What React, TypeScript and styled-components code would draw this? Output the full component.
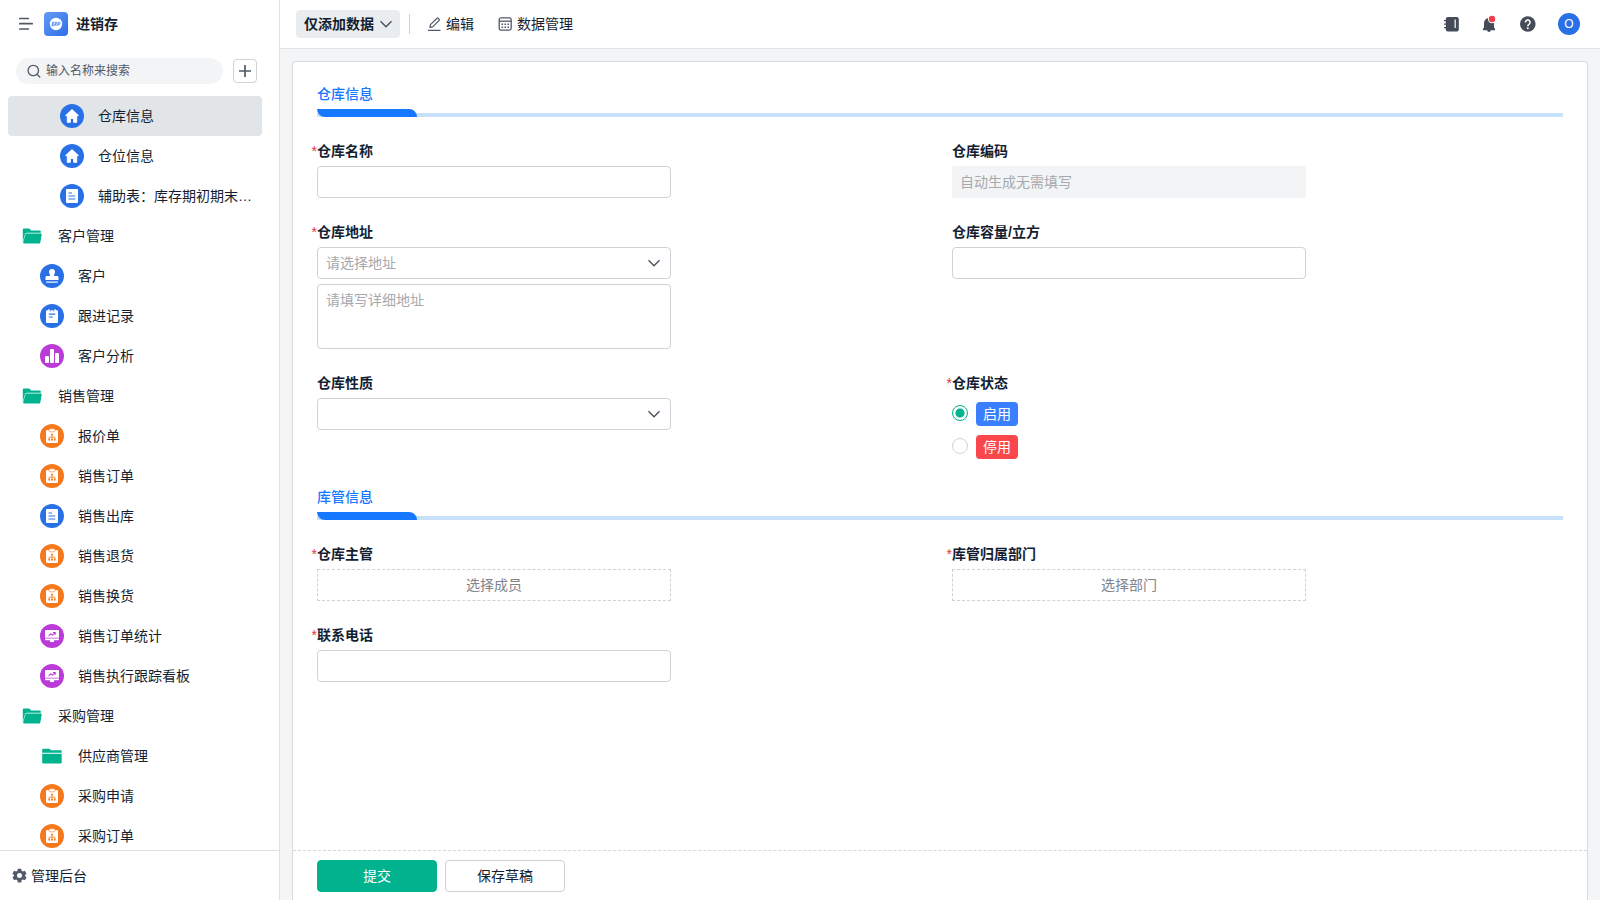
import React from 'react';
import styled, { createGlobalStyle } from 'styled-components';

const INK = '#141e31';
const ICON = '#525967';
const BORDER = '#cfd2d6';
const GREEN = '#00b28e';
const BLUE = '#2970e6';
const ORANGE = '#f7781c';
const PURPLE = '#bb3bd8';

const GlobalStyle = createGlobalStyle`
  *, *::before, *::after { box-sizing: border-box; }
  body {
    margin: 0;
    color: ${INK};
    background: #f3f5f6;
    font: 14px/22px "Liberation Sans", "Noto Sans CJK SC", sans-serif;
  }
  button, input, select, textarea { font: inherit; color: inherit; margin: 0; }
  svg { display: block; flex: none; }
`;

const Shell = styled.div`
  display: flex;
  height: 100vh;
`;

/* Sidebar */

const Sidebar = styled.aside`
  display: flex;
  flex-direction: column;
  flex: none;
  width: 280px;
  background: #fff;
  border-right: 1px solid #dfe2e5;
`;

const Brand = styled.div`
  display: flex;
  align-items: center;
  height: 48px;
  padding: 0 18px;
`;

const BrandName = styled.h1`
  margin: 0 0 0 8px;
  font-size: 14px;
  line-height: 22px;
  font-weight: 600;
`;

const IconButton = styled.button<{ $w?: number }>`
  display: flex;
  align-items: center;
  justify-content: center;
  width: ${(p) => p.$w ?? 16}px;
  height: 24px;
  padding: 0;
  border: 0;
  background: none;
  color: ${ICON};
  cursor: pointer;
`;

const BurgerButton = styled(IconButton)`
  margin-right: 10px;
`;

const SearchRow = styled.div`
  display: flex;
  align-items: center;
  gap: 10px;
  height: 46px;
  padding: 0 22px 0 16px;
`;

const SearchBox = styled.label`
  display: flex;
  flex: 1;
  align-items: center;
  gap: 4px;
  min-width: 0;
  height: 26px;
  padding: 0 10px;
  border-radius: 13px;
  background: #f3f4f6;
  color: ${ICON};
`;

const SearchInput = styled.input`
  flex: 1;
  min-width: 0;
  padding: 0;
  border: 0;
  outline: 0;
  background: none;
  font-size: 12px;
  line-height: 20px;
  &::placeholder { color: #525967; opacity: 1; }
`;

const AddButton = styled(IconButton)`
  flex: none;
  border: 1px solid ${BORDER};
  border-radius: 4px;
`;

const Menu = styled.nav`
  flex: 1;
  min-height: 0;
  padding: 2px 17px 0 8px;
  overflow-y: auto;
  scrollbar-width: none;
`;

const MenuItem = styled.a<{ $level: number; $active?: boolean }>`
  display: flex;
  align-items: center;
  gap: 14px;
  height: 40px;
  padding: 0 8px 0 ${(p) => p.$level * 20 - 8}px;
  border-radius: 4px;
  background: ${(p) => (p.$active ? '#e1e5e8' : 'transparent')};
  color: inherit;
  text-decoration: none;
`;

const MenuText = styled.span`
  overflow: hidden;
  white-space: nowrap;
  text-overflow: ellipsis;
`;

const SidebarFooter = styled.a`
  display: flex;
  align-items: center;
  gap: 4px;
  height: 50px;
  padding: 0 12px;
  border-top: 1px solid #dfe2e5;
  color: inherit;
  text-decoration: none;
`;

/* Main area */

const Main = styled.main`
  display: flex;
  flex: 1;
  flex-direction: column;
  min-width: 0;
`;

const Toolbar = styled.header`
  display: flex;
  align-items: center;
  flex: none;
  height: 49px;
  padding: 0 20px 0 16px;
  background: #fff;
  border-bottom: 1px solid #e0e3e6;
`;

const ModeButton = styled.button`
  display: flex;
  align-items: center;
  gap: 5px;
  height: 28px;
  padding: 0 7px 0 8px;
  border: 0;
  border-radius: 4px;
  background: #e9edef;
  font-weight: 600;
`;

const Divider = styled.span`
  width: 1px;
  height: 20px;
  margin: 0 17px 0 9px;
  background: ${BORDER};
`;

const ToolGroup = styled.div`
  display: flex;
  flex: 1;
  gap: 24px;
`;

const ToolButton = styled.button`
  display: flex;
  align-items: center;
  gap: 4px;
  padding: 0;
  border: 0;
  background: none;
  svg { color: ${ICON}; }
`;

const Actions = styled.div`
  display: flex;
  align-items: center;
  gap: 22px;
`;

const Avatar = styled.button`
  width: 22px;
  height: 22px;
  padding: 0;
  border: 0;
  border-radius: 50%;
  background: ${BLUE};
  color: #fff;
  font-size: 12px;
  line-height: 22px;
`;

const Card = styled.form`
  display: flex;
  flex: 1;
  flex-direction: column;
  min-height: 0;
  margin: 12px 12px 0;
  border: 1px solid #d9dcdf;
  border-bottom: 0;
  border-radius: 4px 4px 0 0;
  background: #fff;
`;

const CardBody = styled.div`
  display: flex;
  flex: 1;
  flex-direction: column;
  gap: 23px;
  min-height: 0;
  padding: 21px 24px;
  overflow-y: auto;
`;

const SectionTitle = styled.h2`
  margin: 0;
  padding-bottom: 4px;
  font-size: 14px;
  line-height: 22px;
  font-weight: 500;
  color: #1677ff;
`;

const SectionBar = styled.div`
  height: 8px;
  background: linear-gradient(#c8e0f9, #c8e0f9) bottom / 100% 4px no-repeat;
  &::before {
    content: '';
    display: block;
    width: 100px;
    height: 8px;
    border-radius: 0 8px 0 8px;
    background: #1677ff;
  }
`;

const Grid = styled.div`
  display: grid;
  grid-template-columns: 1fr 1fr;
  gap: 23px 24px;
`;

const FieldBox = styled.div`
  display: flex;
  flex-direction: column;
  width: 100%;
  max-width: 354px;
`;

const Caption = styled.label`
  position: relative;
  margin-bottom: 4px;
  font-weight: 600;
`;

const Required = styled.span`
  position: absolute;
  right: 100%;
  color: #e0343a;
  font-weight: 400;
`;

const TextInput = styled.input`
  width: 100%;
  height: 32px;
  padding: 0 8px;
  border: 1px solid ${BORDER};
  border-radius: 4px;
  background: #fff;
  &::placeholder { color: #a6a9ae; opacity: 1; }
  &:disabled {
    border-color: #f3f4f6;
    border-radius: 2px;
    padding: 0 7px;
    background: #f3f4f6;
  }
`;

const SelectWrap = styled.div`
  position: relative;
`;

const SelectInput = styled.select`
  display: block;
  width: 100%;
  height: 32px;
  padding: 0 32px 0 8px;
  border: 1px solid ${BORDER};
  border-radius: 4px;
  appearance: none;
  background: #fff;
  color: #a6a9ae;
`;

const SelectArrow = styled.span`
  position: absolute;
  top: 9px;
  right: 10px;
  color: ${ICON};
  pointer-events: none;
`;

const TextArea = styled.textarea`
  display: block;
  height: 65px;
  margin-top: 5px;
  padding: 4px 8px;
  border: 1px solid ${BORDER};
  border-radius: 4px;
  resize: none;
  &::placeholder { color: #a6a9ae; opacity: 1; }
`;

const PickerButton = styled.button`
  height: 32px;
  border: 1px dashed ${BORDER};
  background: #fff;
  color: #7f848d;
`;

const Options = styled.fieldset`
  display: flex;
  flex-direction: column;
  gap: 1px;
  min-width: 0;
  margin: 0;
  padding: 0;
  border: 0;
`;

const OptionsCaption = styled.span`
  position: relative;
  margin-bottom: 3px;
  font-weight: 600;
`;

const Option = styled.label`
  display: flex;
  align-items: center;
  gap: 8px;
  height: 32px;
`;

const Radio = styled.input`
  width: 16px;
  height: 16px;
  margin: 0 0 2px;
  border: 1px solid ${BORDER};
  border-radius: 50%;
  appearance: none;
  background: #fff;
  &:checked {
    border-color: ${GREEN};
    background: radial-gradient(circle, ${GREEN} 4px, #fff 5px);
  }
`;

const Chip = styled.span<{ $color: string }>`
  padding: 0 7px;
  border-radius: 4px;
  background: ${(p) => p.$color};
  color: #fff;
  line-height: 24px;
`;

const FormFooter = styled.footer`
  display: flex;
  gap: 8px;
  flex: none;
  height: 50px;
  padding: 9px 24px 0;
  border-top: 1px dashed #d5d7da;
`;

const FormButton = styled.button<{ $primary?: boolean }>`
  width: 120px;
  height: 32px;
  padding: 0;
  border: 1px solid ${(p) => (p.$primary ? GREEN : BORDER)};
  border-radius: 4px;
  background: ${(p) => (p.$primary ? GREEN : '#fff')};
  color: ${(p) => (p.$primary ? '#fff' : INK)};
`;

/* Icons */

type Glyph = 'home' | 'doc' | 'stamp' | 'note' | 'chart' | 'clip' | 'board' | 'open' | 'folder';

const GLYPHS: Record<Glyph, { bg?: string; art: React.ReactNode }> = {
  home: {
    bg: BLUE,
    art: <path fill="#fff" stroke="#fff" strokeLinejoin="round" d="M12 5.600l6.400 6h-1.700v6.700h-3v-3.800h-3.400v3.800h-3v-6.700H5.600z" />,
  },
  doc: {
    bg: BLUE,
    art: (
      <>
        <rect x="6" y="5" width="12" height="14" rx="1" fill="#fff" />
        <path stroke={BLUE} strokeWidth="1.200" d="M8.500 9H12M8.500 12h6.800M8.500 15h6.800" />
      </>
    ),
  },
  stamp: {
    bg: BLUE,
    art: (
      <>
        <path fill="#fff" d="M12 5a3 3 0 0 1 3 3c0 1.500-1 2-1 3.200 0 .600.400.800 1 .800h2c1 0 1.500.6 1.500 1.500V16h-13v-2.500c0-.9.500-1.500 1.500-1.500h2c.6 0 1-.2 1-.8C10 10 9 9.500 9 8a3 3 0 0 1 3-3z" />
        <path stroke="#fff" strokeWidth="1.200" d="M6.200 18.100h11.600" />
      </>
    ),
  },
  note: {
    bg: BLUE,
    art: (
      <>
        <rect x="6" y="6.200" width="12" height="12.800" rx="1" fill="#fff" />
        <path stroke="#fff" strokeWidth="1.400" strokeLinecap="round" d="M9 5.700V7M15 5.700V7" />
        <path stroke={BLUE} strokeWidth=".7" d="M10.200 5.500v2M13.800 5.500v2" />
        <path stroke={BLUE} strokeWidth="1.200" d="M8.800 10.100h6.400M8.800 13h4" />
      </>
    ),
  },
  chart: {
    bg: PURPLE,
    art: (
      <g fill="#fff">
        <rect x="5" y="12" width="4" height="7" rx="1" />
        <rect x="10" y="5" width="4" height="14" rx="1" />
        <rect x="15" y="9" width="4" height="10" rx="1" />
      </g>
    ),
  },
  clip: {
    bg: ORANGE,
    art: (
      <>
        <rect x="6" y="6" width="12" height="13" rx="1" fill="#fff" />
        <rect x="9" y="4.800" width="6" height="3" rx=".8" fill="#fff" stroke={ORANGE} strokeWidth=".6" />
        <path fill="none" stroke={ORANGE} strokeWidth=".8" d="M12 11v4M9.200 15v-1.800h5.600V15" />
        <path fill={ORANGE} d="M11.100 9.700h1.800v1.800h-1.800zM8.300 14.700H10v1.700H8.300zM11.100 14.700h1.800v1.700h-1.800zM14 14.700h1.700v1.700H14z" />
      </>
    ),
  },
  board: {
    bg: PURPLE,
    art: (
      <>
        <path fill="#fff" d="M6 6h12a1 1 0 0 1 1 1v6.700H5V7a1 1 0 0 1 1-1zM5 14.600h14v.7a1 1 0 0 1-1 1h-4V18h-4v-1.700H6a1 1 0 0 1-1-1z" />
        <path fill="none" stroke={PURPLE} strokeWidth="1.100" d="M8.600 11.800l2.200-2 1.700 1.500 2.500-2.600M12.900 8.500h2.300v2.200" />
      </>
    ),
  },
  open: {
    art: (
      <>
        <path fill={GREEN} d="M2.800 17.500V5.500a1 1 0 0 1 1-1h5.400l2 2h8.600a1 1 0 0 1 1 1v1.300H6.800a2 2 0 0 0-1.800 1.400z" />
        <path fill={GREEN} d="M6.900 9.500h14c.6 0 .9.500.8 1l-1.400 8c-.1.600-.6.900-1.100.9H4.200c-.8 0-1.200-.6-1-1.300l2.200-7.500c.2-.7.800-1.100 1.500-1.100z" />
      </>
    ),
  },
  folder: {
    art: (
      <>
        <path fill={GREEN} d="M2.200 8.800V5.700a1 1 0 0 1 1-1h6l2 1.600h9.500a1 1 0 0 1 1 1v1.500z" />
        <path fill={GREEN} d="M2.200 9.800h19.500v8.600a1 1 0 0 1-1 1H3.200a1 1 0 0 1-1-1z" />
      </>
    ),
  },
};

const MenuGlyph = ({ name }: { name: Glyph }) => (
  <svg width="24" height="24" viewBox="0 0 24 24" aria-hidden="true">
    {GLYPHS[name].bg && <circle cx="12" cy="12" r="12" fill={GLYPHS[name].bg} />}
    {GLYPHS[name].art}
  </svg>
);

const Burger = () => (
  <svg width="16" height="16" viewBox="0 0 16 16" stroke="currentColor" strokeWidth="1.700" strokeLinecap="round">
    <path d="M1.800 2.500h8.500M1.800 7.700h12.400M1.800 13h8.500" />
  </svg>
);

const Logo = () => (
  <svg width="24" height="24" viewBox="0 0 24 24" aria-hidden="true">
    <defs>
      <linearGradient id="logo" x1="0" y1="0" x2="1" y2="1">
        <stop offset="0" stopColor="#659bf3" />
        <stop offset="1" stopColor="#2d6fe8" />
      </linearGradient>
    </defs>
    <rect width="24" height="24" rx="4" fill="url(#logo)" />
    <circle cx="12" cy="12" r="6.200" fill="#fff" />
    <path
      fill="none"
      stroke="#4f88ee"
      strokeWidth="1"
      d="M10.400 10.300H8.600L8 13.700h1.900M8.300 12h1.600M10.800 13.800l.6-3.500h1.200q.9.900-.2 1.900h-1.200l1.200 1.600M13.700 13.800l.6-3.500h1.300q1 1-.2 2.100H14"
    />
  </svg>
);

const SearchIcon = () => (
  <svg width="16" height="16" viewBox="0 0 16 16" fill="none" stroke="currentColor" strokeWidth="1.300" strokeLinecap="round">
    <circle cx="7.300" cy="7.500" r="5.200" />
    <path d="M11.200 11.400l2.600 2.600" />
  </svg>
);

const Plus = () => (
  <svg width="14" height="14" viewBox="0 0 14 14" stroke="currentColor" strokeWidth="1.700">
    <path d="M7 1v12M1 7h12" />
  </svg>
);

const Chevron = () => (
  <svg width="14" height="14" viewBox="0 0 14 14" fill="none" stroke="#464d5b" strokeWidth="1.300">
    <path d="M1.500 4.300L7 9.800l5.500-5.500" />
  </svg>
);

const Gear = () => (
  <svg width="15" height="15" viewBox="0 0 24 24" fill={ICON}>
    <path
      fillRule="evenodd"
      d="M9.300 1h5.400l.7 3.300 2 1.200 3.200-1.100 2.700 4.700-2.500 2.200v1.400l2.500 2.200-2.700 4.700-3.200-1.100-2 1.200-.7 3.300H9.300l-.7-3.300-2-1.200-3.200 1.100L.7 14.900l2.500-2.200v-1.400L.7 9.100l2.700-4.700 3.200 1.100 2-1.200zM12 8a4 4 0 1 0 0 8 4 4 0 0 0 0-8z"
    />
  </svg>
);

const Pencil = () => (
  <svg width="15" height="14" viewBox="0 0 15 14" fill="none" stroke="currentColor" strokeWidth="1.200" strokeLinejoin="round">
    <path d="M3 10.300l.4-2.700 6.700-6.400q.5-.5 1 0l1.100 1.100q.5.500 0 1L5.700 9.900zM1 13.300h12.500" />
  </svg>
);

const TableIcon = () => (
  <svg width="15" height="14" viewBox="0 0 15 14" fill="none" stroke="currentColor" strokeWidth="1.300">
    <rect x="1.200" y=".9" width="12" height="12.200" rx="1.800" />
    <path d="M1.200 4.200h12" />
    <path strokeWidth="1.600" strokeDasharray="1.600 1.400" d="M3.500 7.300h8M3.500 10.300h8" />
  </svg>
);

const Notebook = () => (
  <svg width="16" height="16" viewBox="0 0 16 16">
    <rect x="1.800" y="1" width="13" height="14.500" rx="2" fill="#464b58" />
    <path stroke="#464b58" strokeWidth="1.300" d="M0 4.700h3M0 8.200h3M0 11.700h3" />
    <path stroke="#e4e6e9" strokeWidth="1.400" d="M11.200 3.500v8.500" />
  </svg>
);

const Bell = () => (
  <svg width="16" height="18" viewBox="0 0 16 18">
    <path fill="#464b58" d="M7 3a5 5 0 0 1 5 5v4.500l1 1.200v1.500H8.800a1.800 1.800 0 0 1-3.600 0H1v-1.500l1-1.200V8a5 5 0 0 1 5-5z" />
    <circle cx="10" cy="4" r="4.200" fill="#fff" />
    <circle cx="10" cy="4" r="3.200" fill="#ee4145" />
  </svg>
);

const Help = () => (
  <svg width="16" height="16" viewBox="0 0 16 16">
    <circle cx="7.800" cy="8" r="7.800" fill="#464b58" />
    <path fill="none" stroke="#fff" strokeWidth="1.500" d="M5.500 6.400a2.300 2.300 0 1 1 3.500 1.900q-1.200.7-1.200 1.900" />
    <circle cx="7.800" cy="12.200" r=".95" fill="#fff" />
  </svg>
);

/* Content */

const MENU: { text: string; level: number; glyph: Glyph; active?: boolean }[] = [
  { text: '仓库信息', level: 3, glyph: 'home', active: true },
  { text: '仓位信息', level: 3, glyph: 'home' },
  { text: '辅助表：库存期初期末…', level: 3, glyph: 'doc' },
  { text: '客户管理', level: 1, glyph: 'open' },
  { text: '客户', level: 2, glyph: 'stamp' },
  { text: '跟进记录', level: 2, glyph: 'note' },
  { text: '客户分析', level: 2, glyph: 'chart' },
  { text: '销售管理', level: 1, glyph: 'open' },
  { text: '报价单', level: 2, glyph: 'clip' },
  { text: '销售订单', level: 2, glyph: 'clip' },
  { text: '销售出库', level: 2, glyph: 'doc' },
  { text: '销售退货', level: 2, glyph: 'clip' },
  { text: '销售换货', level: 2, glyph: 'clip' },
  { text: '销售订单统计', level: 2, glyph: 'board' },
  { text: '销售执行跟踪看板', level: 2, glyph: 'board' },
  { text: '采购管理', level: 1, glyph: 'open' },
  { text: '供应商管理', level: 2, glyph: 'folder' },
  { text: '采购申请', level: 2, glyph: 'clip' },
  { text: '采购订单', level: 2, glyph: 'clip' },
];

const Field = ({ id, label, required, children }: { id: string; label: string; required?: boolean; children: React.ReactNode }) => (
  <FieldBox>
    <Caption htmlFor={id}>
      {required && <Required>*</Required>}
      {label}
    </Caption>
    {children}
  </FieldBox>
);

const Select = ({ id, placeholder }: { id: string; placeholder: string }) => (
  <SelectWrap>
    <SelectInput id={id} defaultValue="">
      <option value="">{placeholder}</option>
    </SelectInput>
    <SelectArrow>
      <Chevron />
    </SelectArrow>
  </SelectWrap>
);

const Section = ({ title }: { title: string }) => (
  <div>
    <SectionTitle>{title}</SectionTitle>
    <SectionBar />
  </div>
);

export default function App() {
  return (
    <Shell>
      <GlobalStyle />
      <Sidebar>
        <Brand>
          <BurgerButton type="button" aria-label="菜单">
            <Burger />
          </BurgerButton>
          <Logo />
          <BrandName>进销存</BrandName>
        </Brand>
        <SearchRow>
          <SearchBox>
            <SearchIcon />
            <SearchInput type="text" aria-label="搜索" placeholder="输入名称来搜索" />
          </SearchBox>
          <AddButton type="button" $w={24} aria-label="新建">
            <Plus />
          </AddButton>
        </SearchRow>
        <Menu>
          {MENU.map((m) => (
            <MenuItem key={m.text} href="#" $level={m.level} $active={m.active}>
              <MenuGlyph name={m.glyph} />
              <MenuText>{m.text}</MenuText>
            </MenuItem>
          ))}
        </Menu>
        <SidebarFooter href="#">
          <Gear />
          管理后台
        </SidebarFooter>
      </Sidebar>

      <Main>
        <Toolbar>
          <ModeButton type="button">
            仅添加数据
            <Chevron />
          </ModeButton>
          <Divider />
          <ToolGroup>
            <ToolButton type="button">
              <Pencil />
              编辑
            </ToolButton>
            <ToolButton type="button">
              <TableIcon />
              数据管理
            </ToolButton>
          </ToolGroup>
          <Actions>
            <IconButton type="button" aria-label="通讯录">
              <Notebook />
            </IconButton>
            <IconButton type="button" aria-label="通知">
              <Bell />
            </IconButton>
            <IconButton type="button" aria-label="帮助">
              <Help />
            </IconButton>
            <Avatar type="button">O</Avatar>
          </Actions>
        </Toolbar>

        <Card onSubmit={(e) => e.preventDefault()}>
          <CardBody>
            <Section title="仓库信息" />
            <Grid>
              <Field id="name" label="仓库名称" required>
                <TextInput id="name" type="text" />
              </Field>
              <Field id="code" label="仓库编码">
                <TextInput id="code" type="text" placeholder="自动生成无需填写" disabled />
              </Field>
              <Field id="region" label="仓库地址" required>
                <Select id="region" placeholder="请选择地址" />
                <TextArea aria-label="详细地址" placeholder="请填写详细地址" />
              </Field>
              <Field id="capacity" label="仓库容量/立方">
                <TextInput id="capacity" type="text" />
              </Field>
              <Field id="kind" label="仓库性质">
                <Select id="kind" placeholder="" />
              </Field>
              <Options aria-labelledby="status">
                <OptionsCaption id="status">
                  <Required>*</Required>
                  仓库状态
                </OptionsCaption>
                <Option>
                  <Radio type="radio" name="status" defaultChecked />
                  <Chip $color="#3a7fff">启用</Chip>
                </Option>
                <Option>
                  <Radio type="radio" name="status" />
                  <Chip $color="#f9474b">停用</Chip>
                </Option>
              </Options>
            </Grid>
            <Section title="库管信息" />
            <Grid>
              <Field id="manager" label="仓库主管" required>
                <PickerButton id="manager" type="button">选择成员</PickerButton>
              </Field>
              <Field id="dept" label="库管归属部门" required>
                <PickerButton id="dept" type="button">选择部门</PickerButton>
              </Field>
              <Field id="phone" label="联系电话" required>
                <TextInput id="phone" type="tel" />
              </Field>
            </Grid>
          </CardBody>
          <FormFooter>
            <FormButton type="submit" $primary>提交</FormButton>
            <FormButton type="button">保存草稿</FormButton>
          </FormFooter>
        </Card>
      </Main>
    </Shell>
  );
}
